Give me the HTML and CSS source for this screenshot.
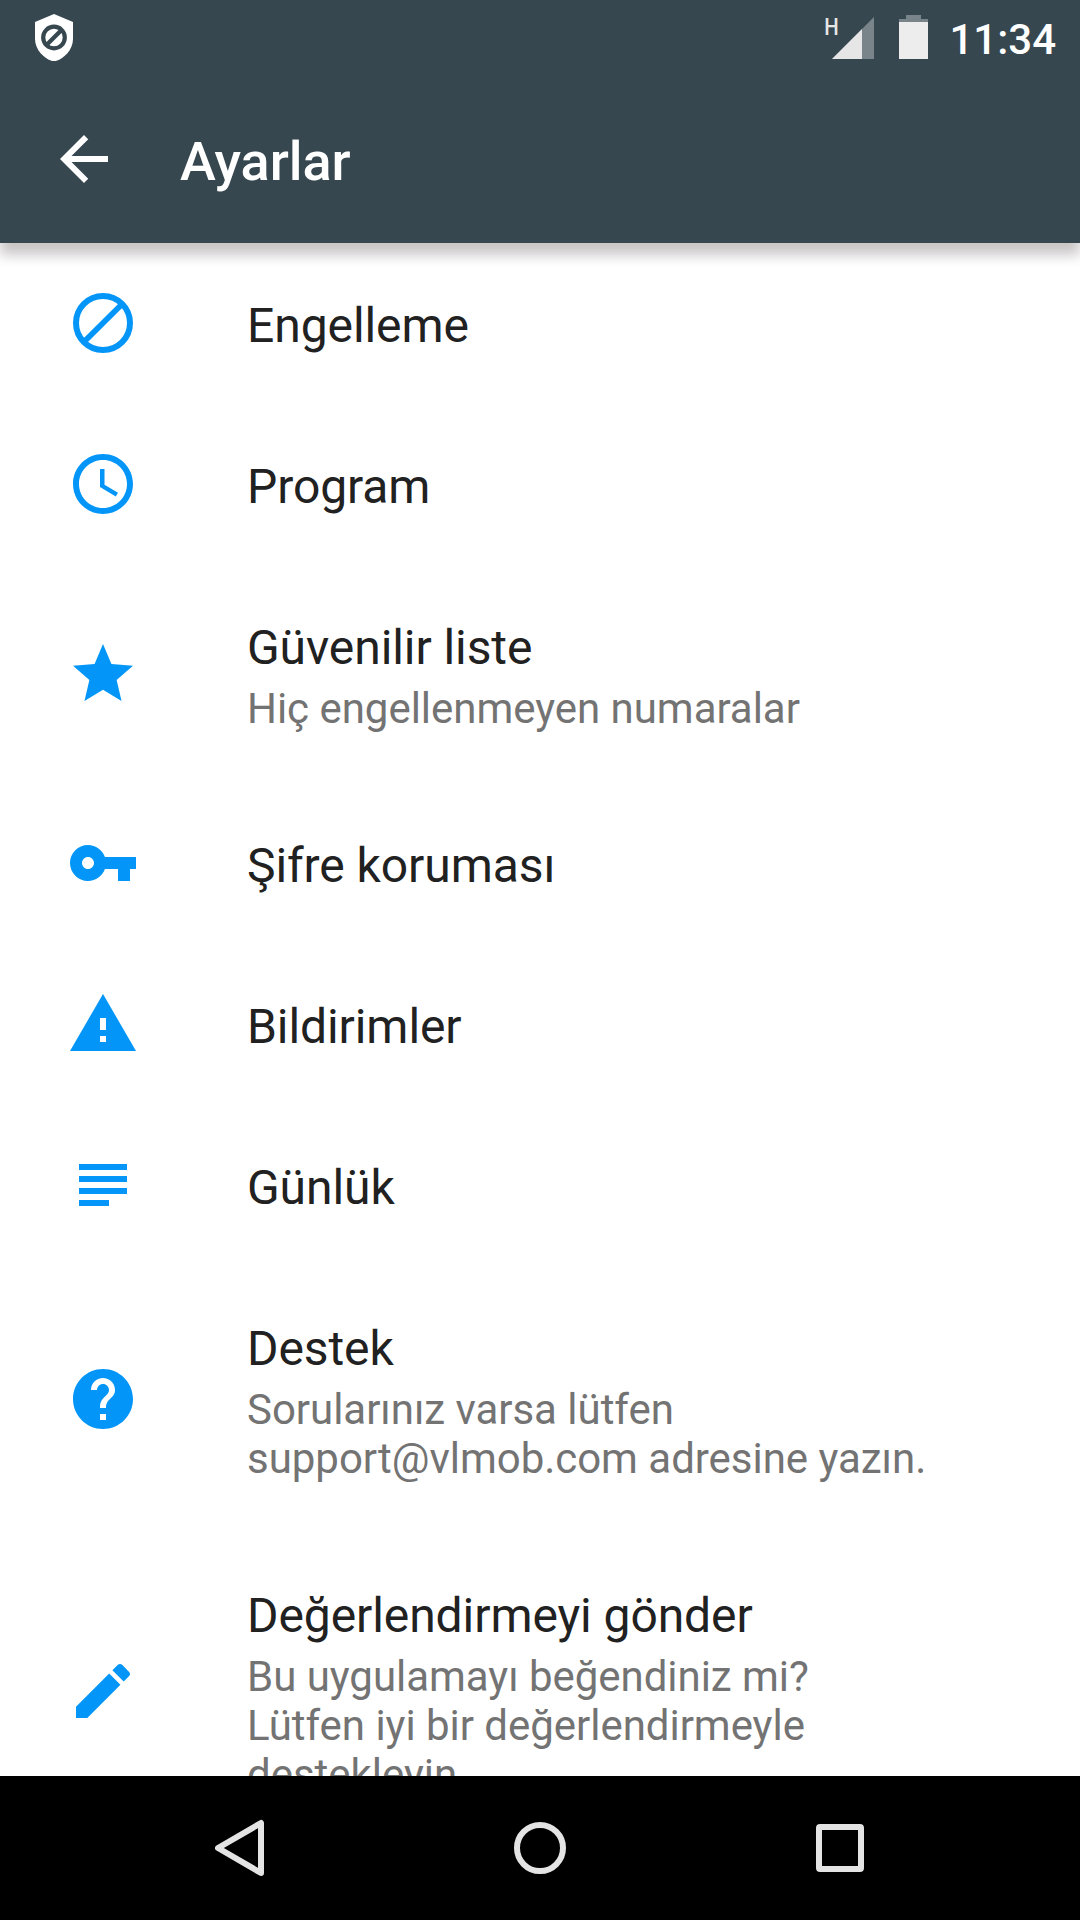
FILE: index.html
```html
<!DOCTYPE html>
<html lang="tr">
<head>
<meta charset="utf-8">
<title>Ayarlar</title>
<link rel="stylesheet" href="styles.css">
</head>
<body>
<div class="screen">
  <header class="header">
    <div class="status-bar">
      <svg class="shield" viewBox="0 0 38 47" width="38" height="47">
        <path fill="#fff" d="M19 0 0 8v17c0 11 9.500 19.500 16.500 21.800q2.500.8 5 0C28.500 44.500 38 36 38 25V8z"/>
        <circle cx="19" cy="23.500" r="10.800" fill="none" stroke="#37474f" stroke-width="4.200"/>
        <path d="M11.500 31 26.500 16" stroke="#37474f" stroke-width="4.200"/>
      </svg>
      <div class="status-right">
        <span class="network">H</span>
        <svg class="signal" viewBox="0 0 42 42" width="42" height="42">
          <path d="M42 0V42H0z" fill="#78838a"/>
          <path d="M30 12V42H0z" fill="#e6e6e6"/>
        </svg>
        <svg class="battery" viewBox="0 0 29 44" width="29" height="44">
          <path d="M7 0h15v4h7v4H0V4h7z" fill="#78838a"/>
          <path d="M0 7h29v37H0z" fill="#ededed"/>
        </svg>
        <span class="clock">11:34</span>
      </div>
    </div>
    <div class="toolbar">
      <svg viewBox="0 0 24 24" width="72" height="72"><path fill="#fff" d="M20 11H7.830l5.590-5.590L12 4l-8 8 8 8 1.410-1.410L7.830 13H20v-2z"/></svg>
      <h1 class="title">Ayarlar</h1>
    </div>
  </header>
  <main class="list">
    <div class="row odd">
      <svg class="icon" viewBox="0 0 24 24"><circle cx="12" cy="12" r="9" fill="none" stroke="currentColor" stroke-width="2"/><path d="M5.800 18.200 18.200 5.800" stroke="currentColor" stroke-width="1.900"/></svg>
      <div class="text"><div class="name">Engelleme</div></div>
    </div>
    <div class="row odd">
      <svg class="icon" viewBox="0 0 24 24"><path d="M11.990 2C6.470 2 2 6.480 2 12s4.470 10 9.990 10C17.520 22 22 17.520 22 12S17.520 2 11.990 2zM12 20c-4.420 0-8-3.580-8-8s3.580-8 8-8 8 3.580 8 8-3.580 8-8 8zm.5-13H11v6l5.250 3.150.75-1.230-4.500-2.670z"/></svg>
      <div class="text"><div class="name">Program</div></div>
    </div>
    <div class="row">
      <svg class="icon" viewBox="0 0 24 24"><path d="M12 17.270 18.180 21l-1.640-7.030L22 9.240l-7.190-.61L12 2 9.190 8.630 2 9.240l5.460 4.730L5.820 21z"/></svg>
      <div class="text"><div class="name">Güvenilir liste</div><div class="summary">Hiç engellenmeyen numaralar</div></div>
    </div>
    <div class="row odd">
      <svg class="icon" viewBox="0 0 24 24"><path d="M12.650 10C11.830 7.670 9.610 6 7 6c-3.310 0-6 2.690-6 6s2.690 6 6 6c2.610 0 4.830-1.670 5.650-4H17v4h4v-4h2v-4H12.650zM7 14c-1.100 0-2-.9-2-2s.9-2 2-2 2 .9 2 2-.9 2-2 2z"/></svg>
      <div class="text"><div class="name">Şifre koruması</div></div>
    </div>
    <div class="row odd">
      <svg class="icon" viewBox="0 0 24 24"><path d="M1 21h22L12 2 1 21zm12-3h-2v-2h2v2zm0-4h-2v-4h2v4z"/></svg>
      <div class="text"><div class="name">Bildirimler</div></div>
    </div>
    <div class="row odd">
      <svg class="icon" viewBox="0 0 24 24"><path d="M14 17H4v2h10v-2zm6-8H4v2h16V9zM4 15h16v-2H4v2zM4 5v2h16V5H4z"/></svg>
      <div class="text"><div class="name">Günlük</div></div>
    </div>
    <div class="row odd">
      <svg class="icon" viewBox="0 0 24 24"><path d="M12 2C6.480 2 2 6.480 2 12s4.480 10 10 10 10-4.480 10-10S17.520 2 12 2zm1 17h-2v-2h2v2zm2.070-7.750-.9.920C13.450 12.900 13 13.500 13 15h-2v-.5c0-1.100.45-2.100 1.170-2.830l1.240-1.260c.37-.36.590-.86.590-1.410 0-1.100-.9-2-2-2s-2 .9-2 2H8c0-2.210 1.790-4 4-4s4 1.790 4 4c0 .88-.36 1.680-.93 2.250z"/></svg>
      <div class="text"><div class="name">Destek</div><div class="summary">Sorularınız varsa lütfen<br>support@vlmob.com adresine yazın.</div></div>
    </div>
    <div class="row">
      <svg class="icon" viewBox="0 0 24 24"><path d="M3 17.250V21h3.750L17.810 9.940l-3.750-3.750L3 17.250zM20.710 7.040c.39-.39.39-1.020 0-1.410l-2.340-2.340c-.39-.39-1.020-.39-1.410 0l-1.830 1.830 3.750 3.750 1.830-1.830z"/></svg>
      <div class="text"><div class="name">Değerlendirmeyi gönder</div><div class="summary">Bu uygulamayı beğendiniz mi?<br>Lütfen iyi bir değerlendirmeyle<br>destekleyin.</div></div>
    </div>
  </main>
  <nav class="nav-bar">
    <svg viewBox="0 0 60 60" width="60" height="60"><path d="M51 5v50L8 30z"/></svg>
    <svg viewBox="0 0 60 60" width="60" height="60"><circle cx="30" cy="30" r="23"/></svg>
    <svg viewBox="0 0 60 60" width="60" height="60"><rect x="9" y="9" width="42" height="42" rx="1"/></svg>
  </nav>
</div>
</body>
</html>
```
FILE: styles.css
```css
* {
  box-sizing: border-box;
}

body {
  margin: 0;
  font-family: Roboto, sans-serif;
  background: #fff;
}

.screen {
  display: flex;
  flex-direction: column;
  width: 1080px;
  height: 1920px;
  overflow: hidden;
}

.header {
  flex: none;
  height: 243px;
  background: #37474f;
  color: #fff;
  position: relative;
  z-index: 1;
  box-shadow: 0 12px 12px rgba(20, 10, 10, 0.23);
}

.status-bar {
  display: flex;
  justify-content: space-between;
  align-items: flex-start;
  height: 75px;
  padding: 0 24px 0 35px;
}

.shield {
  margin-top: 14px;
}

.status-right {
  display: flex;
  align-items: flex-start;
}

.network {
  margin: 13px -8px 0 0;
  font-size: 24px;
  line-height: 28px;
  font-weight: 500;
  color: #e6e6e6;
  transform: scaleX(0.85);
}

.signal {
  margin-top: 17px;
}

.battery {
  margin: 15px 21px 0 25px;
}

.clock {
  margin-top: 15px;
  font-size: 42px;
  line-height: 49px;
  font-weight: 500;
}

.toolbar {
  display: flex;
  align-items: center;
  height: 168px;
  padding: 0 48px;
}

.title {
  margin: 6px 0 0 60px;
  font-size: 54px;
  line-height: 64px;
  font-weight: 500;
}

.list {
  flex: 1;
  min-height: 0;
  overflow: hidden;
}

.row {
  display: flex;
  align-items: center;
  padding-left: 67px;
}

.icon {
  flex: none;
  width: 72px;
  height: 72px;
  fill: currentColor;
  color: #0396f8;
}

/* keeps the icon on whole pixels in rows of odd height */
.odd .icon {
  margin-bottom: 1px;
}

.text {
  margin-left: 108px;
  padding: 50px 0 46px;
  white-space: nowrap;
}

.name {
  font-size: 48px;
  line-height: 65px;
  letter-spacing: -0.08px;
  color: #212121;
}

.summary {
  margin: 4px 0;
  font-size: 42px;
  line-height: 49px;
  letter-spacing: -0.03px;
  color: #737373;
}

.nav-bar {
  flex: none;
  display: flex;
  justify-content: space-between;
  align-items: center;
  height: 144px;
  padding: 0 210px;
  background: #000;
}

.nav-bar svg {
  fill: none;
  stroke: #e4e4e4;
  stroke-width: 6;
  stroke-linejoin: round;
}
```
